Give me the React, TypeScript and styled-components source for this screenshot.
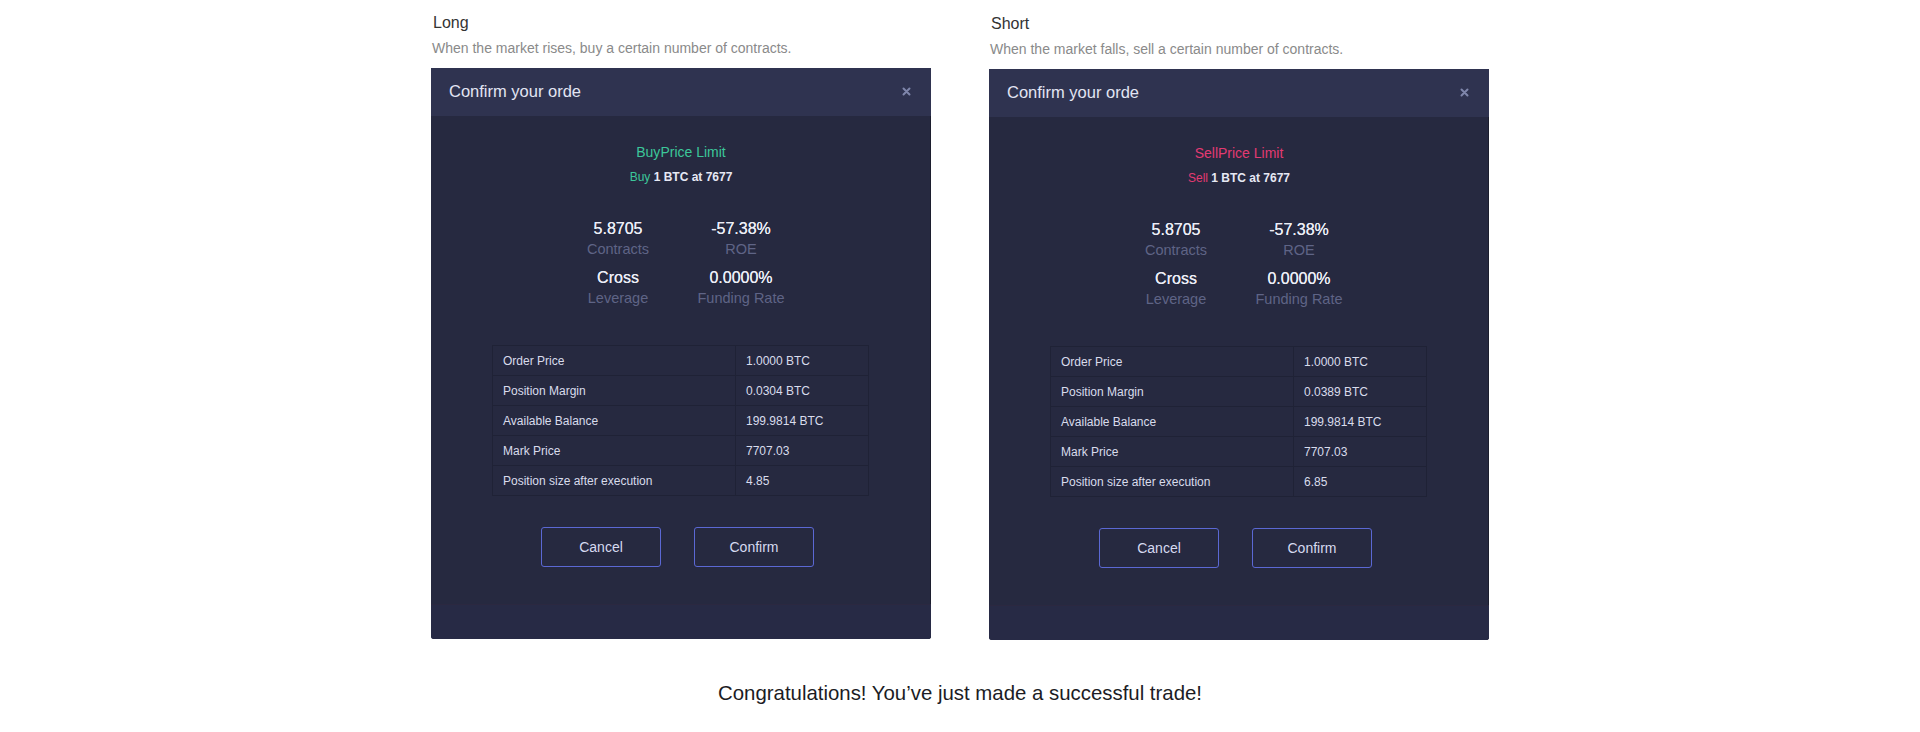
import React from "react";
import styled, { createGlobalStyle } from "styled-components";

const Global = createGlobalStyle`
  html, body { margin: 0; padding: 0; background: #ffffff; }
  body { font-family: "Liberation Sans", Arial, Helvetica, sans-serif; }
  * { box-sizing: border-box; }
`;

const Page = styled.div`
  width: 1920px;
  height: 732px;
  display: flex;
  flex-direction: column;
  align-items: center;
  padding-top: 14px;
`;

const Columns = styled.div`
  display: flex;
  gap: 58px;
  align-items: flex-start;
`;

const Column = styled.section<{ $shift?: number }>`
  width: 500px;
  display: flex;
  flex-direction: column;
  margin-top: ${(p) => p.$shift ?? 0}px;
`;

const Heading = styled.h2`
  margin: 0 0 8px 2px;
  font-size: 16px;
  line-height: 18px;
  font-weight: 400;
  color: #333333;
`;

const Sub = styled.p`
  margin: 0 0 12px 1px;
  font-size: 14px;
  line-height: 16px;
  color: #8a8a8a;
`;

const Modal = styled.div`
  width: 500px;
  background: #262940;
  border-radius: 0 0 3px 3px;
  overflow: hidden;
  display: flex;
  flex-direction: column;
  box-shadow: inset -1px 0 0 #1c1e2e;
`;

const Header = styled.header`
  height: 48px;
  background: #2f3350;
  display: flex;
  align-items: center;
  justify-content: space-between;
  padding: 0 20px 0 18px;
`;

const HeaderTitle = styled.div`
  font-size: 16.5px;
  color: #e2e5f3;
  margin-top: -2px;
`;

const CloseBtn = styled.span`
  display: inline-flex;
  width: 10px;
  height: 10px;
  align-items: center;
  justify-content: center;
  margin-top: -2px;
`;

const Body = styled.div`
  padding: 28px 0 37px;
  display: flex;
  flex-direction: column;
  align-items: center;
  border-bottom: 1px solid #2b2840;
`;

const Footer = styled.div`
  height: 34px;
  background: #272a45;
`;

const OrderType = styled.div<{ $color: string }>`
  font-size: 14px;
  line-height: 16px;
  color: ${(p) => p.$color};
`;

const OrderLine = styled.div`
  margin-top: 10px;
  font-size: 12px;
  line-height: 14px;
  font-weight: 700;
  color: #e6e8f4;
`;

const Side = styled.span<{ $color: string }>`
  font-weight: 400;
  color: ${(p) => p.$color};
`;

const Stats = styled.div`
  margin-top: 36px;
  display: grid;
  grid-template-columns: 123px 123px;
  row-gap: 11px;
  margin-left: -3px;
`;

const Stat = styled.div`
  display: flex;
  flex-direction: column;
  align-items: center;
  gap: 3px;
`;

const StatValue = styled.div`
  font-size: 16px;
  line-height: 18px;
  color: #eceef7;
  text-shadow: 0 0 0.4px #eceef7;
`;

const StatLabel = styled.div`
  font-size: 14.5px;
  line-height: 17px;
  color: #5f6486;
`;

const Table = styled.table`
  margin-top: 38px;
  width: 377px;
  border-collapse: collapse;
  margin-left: -1px;
`;

const Cell = styled.td<{ $w?: number }>`
  height: 30px;
  padding: 0 10px;
  border: 1px solid #1f2236;
  font-size: 12px;
  color: #d9dcec;
  width: ${(p) => (p.$w ? `${p.$w}px` : "auto")};
`;

const Buttons = styled.div`
  margin-top: 31px;
  display: flex;
  gap: 33px;
  margin-left: -7px;
`;

const Button = styled.button`
  width: 120px;
  height: 40px;
  background: transparent;
  border: 1.5px solid #5b68d4;
  border-radius: 3px;
  font-family: "Liberation Sans", Arial, sans-serif;
  font-size: 14px;
  color: #d6daf0;
  cursor: pointer;
`;

const Congrats = styled.p`
  margin: 41px 0 0;
  font-size: 20.4px;
  line-height: 24px;
  color: #1c1c24;
`;

type Info = {
  heading: string;
  sub: string;
  side: string;
  color: string;
  margin: string;
  size: string;
  shift: number;
};

const data: Info[] = [
  {
    heading: "Long",
    sub: "When the market rises, buy a certain number of contracts.",
    side: "Buy",
    color: "#3cc79a",
    margin: "0.0304 BTC",
    size: "4.85",
    shift: 0,
  },
  {
    heading: "Short",
    sub: "When the market falls, sell a certain number of contracts.",
    side: "Sell",
    color: "#e33a72",
    margin: "0.0389 BTC",
    size: "6.85",
    shift: 1,
  },
];

const CloseIcon = () => (
  <svg width="9" height="9" viewBox="0 0 9 9">
    <path d="M1.5 1.5 L7.5 7.5 M7.5 1.5 L1.5 7.5" stroke="#7f86ab" strokeWidth="2" strokeLinecap="round" />
  </svg>
);

const ConfirmModal = ({ info }: { info: Info }) => {
  const rows: [string, string][] = [
    ["Order Price", "1.0000 BTC"],
    ["Position Margin", info.margin],
    ["Available Balance", "199.9814 BTC"],
    ["Mark Price", "7707.03"],
    ["Position size after execution", info.size],
  ];
  return (
    <Modal>
      <Header>
        <HeaderTitle>Confirm your orde</HeaderTitle>
        <CloseBtn>
          <CloseIcon />
        </CloseBtn>
      </Header>
      <Body>
        <OrderType $color={info.color}>{info.side}Price Limit</OrderType>
        <OrderLine>
          <Side $color={info.color}>{info.side}</Side> 1 BTC at 7677
        </OrderLine>
        <Stats>
          <Stat>
            <StatValue>5.8705</StatValue>
            <StatLabel>Contracts</StatLabel>
          </Stat>
          <Stat>
            <StatValue>-57.38%</StatValue>
            <StatLabel>ROE</StatLabel>
          </Stat>
          <Stat>
            <StatValue>Cross</StatValue>
            <StatLabel>Leverage</StatLabel>
          </Stat>
          <Stat>
            <StatValue>0.0000%</StatValue>
            <StatLabel>Funding Rate</StatLabel>
          </Stat>
        </Stats>
        <Table>
          <tbody>
            {rows.map(([k, v]) => (
              <tr key={k}>
                <Cell $w={243}>{k}</Cell>
                <Cell>{v}</Cell>
              </tr>
            ))}
          </tbody>
        </Table>
        <Buttons>
          <Button>Cancel</Button>
          <Button>Confirm</Button>
        </Buttons>
      </Body>
      <Footer />
    </Modal>
  );
};

export default function App() {
  return (
    <>
      <Global />
      <Page>
        <Columns>
          {data.map((d) => (
            <Column key={d.heading} $shift={d.shift}>
              <Heading>{d.heading}</Heading>
              <Sub>{d.sub}</Sub>
              <ConfirmModal info={d} />
            </Column>
          ))}
        </Columns>
        <Congrats>Congratulations! You’ve just made a successful trade!</Congrats>
      </Page>
    </>
  );
}
